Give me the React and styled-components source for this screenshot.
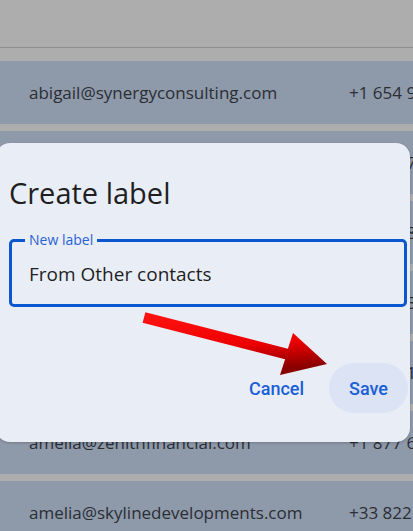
import React from 'react'
import styled, { createGlobalStyle } from 'styled-components'

const Global = createGlobalStyle`
  html, body { margin: 0; padding: 0; }
  body { font-family: "Open Sans", Roboto, Arial, sans-serif; }
`

const contacts = [
  { email: 'abigail@synergyconsulting.com', phone: '+1 654 987 3210' },
  { email: 'adam@brightpathsolutions.com', phone: '+44 20 7946 0958' },
  { email: 'alex@summitpartners.com', phone: '+61 2 9876 5432' },
  { email: 'alice@northwindtraders.com', phone: '+1 415 555 0199' },
  { email: 'amanda@bluewavetech.com', phone: '+49 30 1234 5678' },
  { email: 'amelia@zenithfinancial.com', phone: '+1 877 654 3210' },
  { email: 'amelia@skylinedevelopments.com', phone: '+33 822 456 789' },
]

export default function App() {
  return (
    <Page>
      <Global />
      <TopBar />
      <Divider />
      <List>
        {contacts.map((c) => (
          <Row key={c.email}>
            <Email>{c.email}</Email>
            <Phone>{c.phone}</Phone>
          </Row>
        ))}
      </List>

      <Dialog>
        <Title>Create label</Title>
        <Field>
          <FieldLabel>New label</FieldLabel>
          <FieldValue>From Other contacts</FieldValue>
        </Field>
        <Actions>
          <TextButton>Cancel</TextButton>
          <TextButton tonal>Save</TextButton>
        </Actions>
      </Dialog>

      <Arrow viewBox="0 0 413 531" width="413" height="531">
        <defs>
          <linearGradient id="arrowShade" x1="0" y1="0" x2="0.2" y2="1">
            <stop offset="0" stopColor="#ff1414" />
            <stop offset="0.6" stopColor="#ee0000" />
            <stop offset="1" stopColor="#8a0000" />
          </linearGradient>
        </defs>
        <polygon
          points="145.4,312.2 287.9,348.7 293,333 327,364 280,375 285.1,359.3 142.6,322.8"
          fill="url(#arrowShade)"
        />
      </Arrow>
    </Page>
  )
}

const Page = styled.div`
  position: relative;
  width: 413px;
  height: 531px;
  overflow: hidden;
  background: #adadad;
`

const TopBar = styled.div`
  height: 47px;
`

const Divider = styled.div`
  height: 1px;
  background: #8f8f8f;
  margin-bottom: 13px;
`

const List = styled.div`
  display: flex;
  flex-direction: column;
  gap: 7px;
`

const Row = styled.div`
  height: 63px;
  display: flex;
  align-items: center;
  padding-left: 29px;
  background: #8e99aa;
  color: #2b2e34;
  font-size: 17px;
  white-space: nowrap;
`

const Email = styled.span`
  width: 320px;
  flex-shrink: 0;
`

const Phone = styled.span``

const Dialog = styled.div`
  position: absolute;
  top: 143px;
  left: -4px;
  width: 414px;
  height: 299px;
  box-sizing: border-box;
  padding: 31px 2px 0 13px;
  background: #e9edf6;
  border-radius: 14px;
  box-shadow: 0 1px 3px rgba(0, 0, 0, 0.2);
  display: flex;
  flex-direction: column;
`

const Title = styled.h1`
  margin: 0;
  font-size: 29px;
  font-weight: 400;
  line-height: 38px;
  color: #1f1f1f;
`

const Field = styled.div`
  position: relative;
  margin: 27px 1px 0 0;
  height: 68px;
  box-sizing: border-box;
  border: 3px solid #0b57d0;
  border-radius: 5px;
  display: flex;
  align-items: center;
  padding-left: 17px;
`

const FieldLabel = styled.span`
  position: absolute;
  top: -10px;
  left: 13px;
  padding: 0 4px;
  background: #e9edf6;
  color: #2a62d6;
  font-size: 14px;
  line-height: 16px;
`

const FieldValue = styled.span`
  font-size: 19px;
  color: #1f1f1f;
  margin-top: 1px;
`

const Actions = styled.div`
  margin-top: 56px;
  display: flex;
  justify-content: flex-end;
  align-items: center;
  gap: 5px;
`

const TextButton = styled.div`
  height: 50px;
  padding: 0 20px;
  display: flex;
  align-items: center;
  border-radius: 25px;
  background: ${(p) => (p.tonal ? '#dbe3f4' : 'transparent')};
  color: #1a5fd6;
  font-family: Roboto, Arial, sans-serif;
  font-size: 18px;
  font-weight: 500;
`

const Arrow = styled.svg`
  position: absolute;
  top: 0;
  left: 0;
  pointer-events: none;
`
